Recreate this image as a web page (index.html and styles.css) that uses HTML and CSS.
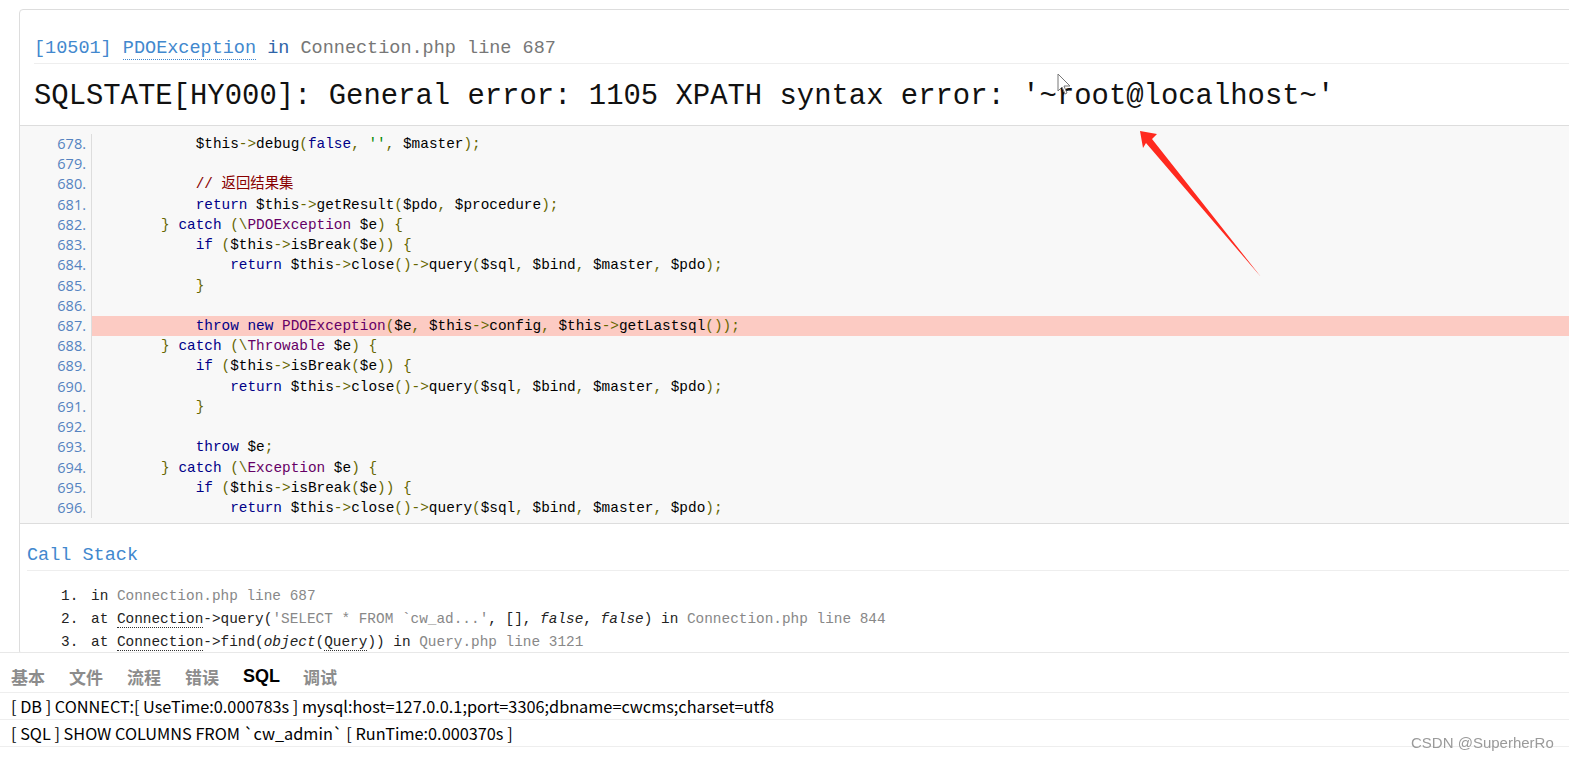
FILE: index.html
```html
<!DOCTYPE html>
<html lang="en">
<head>
    <meta charset="UTF-8">
    <meta name="viewport" content="width=device-width, initial-scale=1.0">
    <title>System Error</title>
    <link rel="stylesheet" href="styles.css">
</head>
<body>
    <div class="exception">
        <div class="message">
            <div class="info">
                <h2>[10501] <abbr class="cls">PDOException</abbr> <span class="in">in</span> <span class="toggle">Connection.php line 687</span></h2>
            </div>
            <h1>SQLSTATE[HY000]: General error: 1105 XPATH syntax error: '~root@localhost~'</h1>
        </div>

        <div class="source-code">
            <div class="line"><span class="ln">678.</span><pre>            <span class="pln">$this</span><span class="pun">-&gt;</span><span class="pln">debug</span><span class="pun">(</span><span class="kwd">false</span><span class="pun">,</span> <span class="str">''</span><span class="pun">,</span> <span class="pln">$master</span><span class="pun">);</span></pre></div>
            <div class="line"><span class="ln">679.</span><pre> </pre></div>
            <div class="line"><span class="ln">680.</span><pre>            <span class="com">// 返回结果集</span></pre></div>
            <div class="line"><span class="ln">681.</span><pre>            <span class="kwd">return</span> <span class="pln">$this</span><span class="pun">-&gt;</span><span class="pln">getResult</span><span class="pun">(</span><span class="pln">$pdo</span><span class="pun">,</span> <span class="pln">$procedure</span><span class="pun">);</span></pre></div>
            <div class="line"><span class="ln">682.</span><pre>        <span class="pun">}</span> <span class="kwd">catch</span> <span class="pun">(\</span><span class="typ">PDOException</span> <span class="pln">$e</span><span class="pun">)</span> <span class="pun">{</span></pre></div>
            <div class="line"><span class="ln">683.</span><pre>            <span class="kwd">if</span> <span class="pun">(</span><span class="pln">$this</span><span class="pun">-&gt;</span><span class="pln">isBreak</span><span class="pun">(</span><span class="pln">$e</span><span class="pun">))</span> <span class="pun">{</span></pre></div>
            <div class="line"><span class="ln">684.</span><pre>                <span class="kwd">return</span> <span class="pln">$this</span><span class="pun">-&gt;</span><span class="pln">close</span><span class="pun">()-&gt;</span><span class="pln">query</span><span class="pun">(</span><span class="pln">$sql</span><span class="pun">,</span> <span class="pln">$bind</span><span class="pun">,</span> <span class="pln">$master</span><span class="pun">,</span> <span class="pln">$pdo</span><span class="pun">);</span></pre></div>
            <div class="line"><span class="ln">685.</span><pre>            <span class="pun">}</span></pre></div>
            <div class="line"><span class="ln">686.</span><pre> </pre></div>
            <div class="line current"><span class="ln">687.</span><pre>            <span class="kwd">throw</span> <span class="kwd">new</span> <span class="typ">PDOException</span><span class="pun">(</span><span class="pln">$e</span><span class="pun">,</span> <span class="pln">$this</span><span class="pun">-&gt;</span><span class="pln">config</span><span class="pun">,</span> <span class="pln">$this</span><span class="pun">-&gt;</span><span class="pln">getLastsql</span><span class="pun">());</span></pre></div>
            <div class="line"><span class="ln">688.</span><pre>        <span class="pun">}</span> <span class="kwd">catch</span> <span class="pun">(\</span><span class="typ">Throwable</span> <span class="pln">$e</span><span class="pun">)</span> <span class="pun">{</span></pre></div>
            <div class="line"><span class="ln">689.</span><pre>            <span class="kwd">if</span> <span class="pun">(</span><span class="pln">$this</span><span class="pun">-&gt;</span><span class="pln">isBreak</span><span class="pun">(</span><span class="pln">$e</span><span class="pun">))</span> <span class="pun">{</span></pre></div>
            <div class="line"><span class="ln">690.</span><pre>                <span class="kwd">return</span> <span class="pln">$this</span><span class="pun">-&gt;</span><span class="pln">close</span><span class="pun">()-&gt;</span><span class="pln">query</span><span class="pun">(</span><span class="pln">$sql</span><span class="pun">,</span> <span class="pln">$bind</span><span class="pun">,</span> <span class="pln">$master</span><span class="pun">,</span> <span class="pln">$pdo</span><span class="pun">);</span></pre></div>
            <div class="line"><span class="ln">691.</span><pre>            <span class="pun">}</span></pre></div>
            <div class="line"><span class="ln">692.</span><pre> </pre></div>
            <div class="line"><span class="ln">693.</span><pre>            <span class="kwd">throw</span> <span class="pln">$e</span><span class="pun">;</span></pre></div>
            <div class="line"><span class="ln">694.</span><pre>        <span class="pun">}</span> <span class="kwd">catch</span> <span class="pun">(\</span><span class="typ">Exception</span> <span class="pln">$e</span><span class="pun">)</span> <span class="pun">{</span></pre></div>
            <div class="line"><span class="ln">695.</span><pre>            <span class="kwd">if</span> <span class="pun">(</span><span class="pln">$this</span><span class="pun">-&gt;</span><span class="pln">isBreak</span><span class="pun">(</span><span class="pln">$e</span><span class="pun">))</span> <span class="pun">{</span></pre></div>
            <div class="line"><span class="ln">696.</span><pre>                <span class="kwd">return</span> <span class="pln">$this</span><span class="pun">-&gt;</span><span class="pln">close</span><span class="pun">()-&gt;</span><span class="pln">query</span><span class="pun">(</span><span class="pln">$sql</span><span class="pun">,</span> <span class="pln">$bind</span><span class="pun">,</span> <span class="pln">$master</span><span class="pun">,</span> <span class="pln">$pdo</span><span class="pun">);</span></pre></div>
        </div>

        <div class="trace">
            <h2>Call Stack</h2>
            <ol>
                <li>in <span class="file">Connection.php line 687</span></li>
                <li>at <abbr>Connection</abbr>-&gt;query(<span class="arg">'SELECT * FROM `cw_ad...'</span>, [], <em>false</em>, <em>false</em>) in <span class="file">Connection.php line 844</span></li>
                <li>at <abbr>Connection</abbr>-&gt;find(<em>object</em>(<abbr>Query</abbr>)) in <span class="file">Query.php line 3121</span></li>
            </ol>
        </div>
    </div>

    <div class="page-trace">
        <div class="trace-tabs">
            <span class="tab">基本</span>
            <span class="tab">文件</span>
            <span class="tab">流程</span>
            <span class="tab">错误</span>
            <span class="tab active">SQL</span>
            <span class="tab">调试</span>
        </div>
        <ul class="trace-rows">
            <li>[ DB ] CONNECT:[ UseTime:0.000783s ] mysql:host=127.0.0.1;port=3306;dbname=cwcms;charset=utf8</li>
            <li>[ SQL ] SHOW COLUMNS FROM `cw_admin` [ RunTime:0.000370s ]</li>
            <li></li>
        </ul>
    </div>

    <!-- annotation arrow drawn over the screenshot -->
    <svg class="arrow" width="140" height="160" viewBox="1130 125 140 160">
        <polygon points="1140,131 1157,134 1152,139 1261,277 1146,143 1143,148" fill="#ff2a1f"/>
    </svg>

    <svg class="cursor" width="16" height="24" viewBox="0 0 16 24">
        <path d="M1 1 L1 18 L5 14 L8 21 L10 20 L7 13 L13 13 Z" fill="#fff" stroke="#777" stroke-width="1"/>
    </svg>

    <div class="watermark">CSDN @SuperherRo</div>
</body>
</html>
```

FILE: styles.css
```css
* {
    margin: 0;
    padding: 0;
    box-sizing: border-box;
}

html, body {
    height: 100%;
    overflow: hidden;
}

body {
    background-color: #fff;
    color: #333;
    font-family: "Liberation Mono", "DejaVu Sans Mono", monospace;
}

abbr {
    text-decoration: none;
    border-bottom: 1px dotted #333;
}

.exception {
    margin: 9px 0 0 19px;
    width: calc(100% + 20px);
    border: 1px solid #ddd;
    border-radius: 4px;
    background-color: #fff;
}

/* header */
.message .info {
    padding: 26px 0 1px 0;
    margin: 0 0 0 14px;
    border-bottom: 1px solid #eee;
}

.message h2 {
    font-size: 18.5px;
    line-height: 26px;
    font-weight: 400;
    color: #4288ce;
}

.message h2 .cls {
    border-bottom: 1px dotted #4288ce;
}

.message h2 .in {
    color: #2f64a8;
}

.message h2 .toggle {
    color: #777;
}

.message h1 {
    font-size: 28.9px;
    line-height: 36px;
    font-weight: 400;
    color: #111;
    padding: 15px 0 10px 14px;
    border-bottom: 1px solid #ddd;
}

/* source code */
.source-code {
    background-color: #f8f8f8;
    padding: 8px 0 5px 0;
    border-bottom: 1px solid #ddd;
}

.line {
    display: flex;
    height: 20.22px;
    line-height: 20.22px;
}

.ln {
    width: 72px;
    flex-shrink: 0;
    text-align: right;
    padding-right: 5px;
    border-right: 1px solid #ddd;
    font-family: "Open Sans", "Noto Sans", sans-serif;
    font-size: 14.5px;
    color: #5583c0;
}

.line pre {
    flex: 1;
    font-family: "Liberation Mono", "Noto Sans CJK SC", monospace;
    font-size: 14.4px;
    color: #000;
}

.line.current pre {
    background-color: #fccbc3;
}

.pln { color: #000; }
.kwd { color: #000088; }
.typ { color: #660066; }
.str { color: #008800; }
.com { color: #880000; }
.pun { color: #666600; }

/* call stack */
.trace {
    padding: 19px 0 0 7px;
}

.trace h2 {
    font-size: 18.5px;
    line-height: 26px;
    font-weight: 400;
    color: #4288ce;
    padding-bottom: 1px;
    border-bottom: 1px solid #eee;
}

.trace ol {
    margin: 14px 0 0 60px;
    font-size: 14.4px;
    line-height: 23px;
    color: #222;
}

.trace ol li {
    padding: 0 4px;
}

.trace .file,
.trace .arg {
    color: #888;
}

.trace em {
    font-style: italic;
}

/* page trace toolbar */
.page-trace {
    position: fixed;
    left: 0;
    right: 0;
    bottom: 0;
    height: 108px;
    background-color: #fff;
    border-top: 1px solid #e8e8e8;
    font-family: "Noto Sans CJK SC", "Liberation Sans", sans-serif;
}

.trace-tabs {
    display: flex;
    gap: 23px;
    height: 40px;
    align-items: center;
    padding: 8px 0 0 11px;
    border-bottom: 1px solid #eee;
}

.tab {
    min-width: 35px;
    font-size: 17px;
    font-weight: 700;
    color: #8c8c8c;
}

.tab.active {
    color: #000;
    font-family: "Liberation Sans", sans-serif;
    font-size: 18px;
}

.trace-rows {
    list-style: none;
}

.trace-rows li {
    height: 27px;
    line-height: 26px;
    padding-left: 11px;
    border-bottom: 1px solid #eee;
    font-size: 16.3px;
    color: #000;
}

/* overlays */
.arrow {
    position: absolute;
    left: 1130px;
    top: 125px;
}

.cursor {
    position: absolute;
    left: 1057px;
    top: 73px;
}

.watermark {
    position: absolute;
    left: 1411px;
    top: 734px;
    font-family: "Liberation Sans", sans-serif;
    font-size: 15px;
    color: #9a9a9a;
}
```
